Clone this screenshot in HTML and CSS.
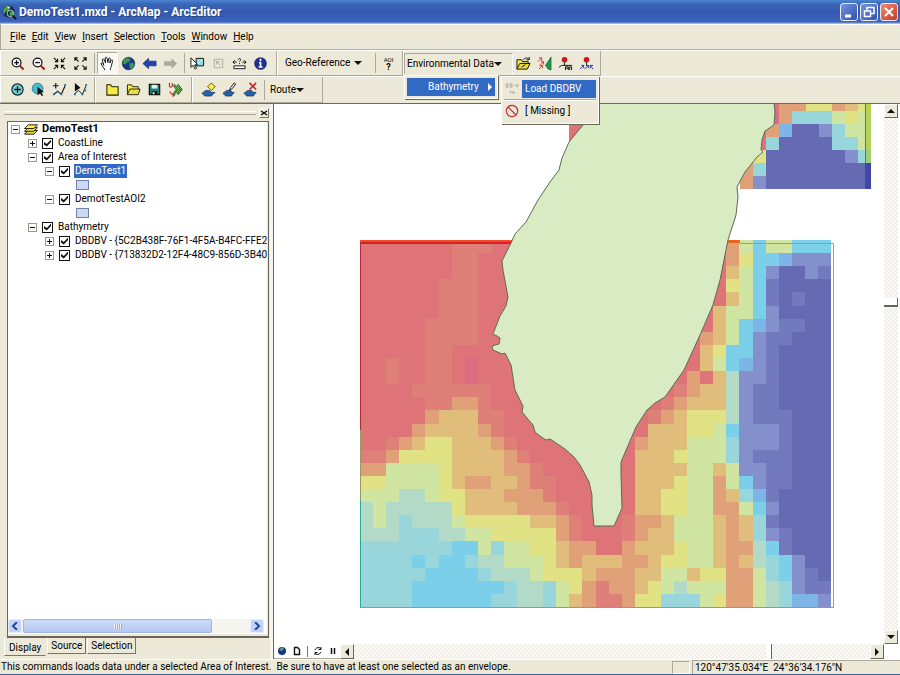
FILE: index.html
```html
<!DOCTYPE html>
<html lang="en">
<head>
<meta charset="utf-8">
<title>DemoTest1.mxd - ArcMap - ArcEditor</title>
<link rel="stylesheet" href="styles.css">
</head>
<body>
<header class="titlebar">
  <svg class="app-icon" viewBox="0 0 16 16"><circle cx="7" cy="7" r="6.500" fill="#17304a"/><path d="M2 3l4-2 3 2-2 3-3 1-2 3-1-3zM9 7l3 0 1 3-3 3-2-3z" fill="#49a548"/><path d="M5 1l4 1-2 2z" fill="#d5ead8"/><circle cx="9" cy="9" r="3.500" fill="none" stroke="#b8cbd8"/><path d="M11 11l4 4" stroke="#111" stroke-width="2"/></svg>
  <h1>DemoTest1.mxd - ArcMap - ArcEditor</h1>
  <button class="win" aria-label="Minimize"><svg viewBox="0 0 16 16"><path d="M4 12h6" stroke="#fff" stroke-width="3"/></svg></button>
  <button class="win" aria-label="Restore"><svg viewBox="0 0 16 16" fill="none" stroke="#fff" stroke-width="1.500"><path d="M6 6V3.500h7v6h-3M6 3.500h7"/><path d="M3.500 7h6v5.500h-6z"/></svg></button>
  <button class="win close" aria-label="Close"><svg viewBox="0 0 16 16"><path d="M4 4l8 8M12 4l-8 8" stroke="#fff" stroke-width="2"/></svg></button>
</header>

<nav class="menubar">
  <button><u>F</u>ile</button><button><u>E</u>dit</button><button><u>V</u>iew</button><button><u>I</u>nsert</button><button><u>S</u>election</button><button><u>T</u>ools</button><button><u>W</u>indow</button><button><u>H</u>elp</button>
</nav>

<div class="toolrow">
  <div class="toolbar">
    <button class="tool" aria-label="Zoom in"><svg viewBox="0 0 16 16"><circle cx="7" cy="7" r="4.700" fill="#f8f8f8" stroke="#111" stroke-width="1.300"/><path d="M4.500 7h5M7 4.500v5" stroke="#111" stroke-width="1.400"/><path d="M10.500 10.500l4 4" stroke="#9c2020" stroke-width="2.200"/></svg></button>
    <button class="tool" aria-label="Zoom out"><svg viewBox="0 0 16 16"><circle cx="7" cy="7" r="4.700" fill="#f8f8f8" stroke="#111" stroke-width="1.300"/><path d="M4.500 7h5" stroke="#111" stroke-width="1.400"/><path d="M10.500 10.500l4 4" stroke="#9c2020" stroke-width="2.200"/></svg></button>
    <button class="tool" aria-label="Fixed zoom in"><svg viewBox="0 0 16 16" fill="none" stroke="#111" stroke-width="1.200"><path d="M2 2l4 4M3 6h3V3M14 2l-4 4M13 6h-3V3M2 14l4-4M3 10h3v3M14 14l-4-4M13 10h-3v3"/></svg></button>
    <button class="tool" aria-label="Fixed zoom out"><svg viewBox="0 0 16 16" fill="none" stroke="#111" stroke-width="1.200"><path d="M2 2l4 4M2 5V2h3M14 2l-4 4M14 5V2h-3M2 14l4-4M2 11v3h3M14 14l-4-4M14 11v3h-3"/></svg></button>
    <span class="sep"></span>
    <button class="tool pressed" aria-label="Pan"><svg viewBox="0 0 16 16"><path d="M5 15c0-2-3-4-4-7 1-1 2 0 3 2L2.500 4C3 2.500 4 3 4.500 4L6 7.500 5.500 2c1-1.500 2-.5 2 .5L8.500 7l.7-4.500c1-1 1.800-.3 1.700 1L10.500 7.500l1.500-3c1-.8 1.700 0 1.400 1L12 11c-.5 2-1 2-1 4" fill="#fff" stroke="#111"/></svg></button>
    <button class="tool" aria-label="Full extent"><svg viewBox="0 0 16 16"><circle cx="8" cy="8" r="6.700" fill="#163a88" stroke="#10204c" stroke-width=".6"/><path d="M3 4l3-2 4 1-1 3-3 1-1 2-3-1zM9 8l4-1 1 3-3 4-2-2z" fill="#3c9a4c"/></svg></button>
    <button class="tool" aria-label="Back"><svg viewBox="0 0 16 16"><path d="M1 8l6-5.500V5.500h8v5H7v3z" fill="#2244b0" stroke="#102860" stroke-width=".7"/></svg></button>
    <button class="tool" aria-label="Forward"><svg viewBox="0 0 16 16"><path d="M15 8L9 2.500V5.500H1v5h8v3z" fill="#aaa99e"/></svg></button>
    <span class="sep"></span>
    <button class="tool" aria-label="Select features"><svg viewBox="0 0 16 16"><path d="M6.500 2.500h8v8h-8z" fill="#8fd8ea" stroke="#111"/><path d="M8 9l5-5" stroke="#fff"/><path d="M1 2v10l2.500-2 2 4 1.500-1-2-3.500L8 9z" fill="#fff" stroke="#111"/></svg></button>
    <button class="tool" aria-label="Clear selection"><svg viewBox="0 0 16 16" fill="none" stroke="#aaa99e"><path d="M3.500 3.500h9v9h-9zM6 6l4 4M6 9V6h3"/></svg></button>
    <button class="tool" aria-label="Measure"><svg viewBox="0 0 16 16" fill="none" stroke="#111"><path d="M2 10.500h12v3H2z" fill="#fff"/><path d="M1 6.500h4M11 6.500h4M3 4.500l-2 2 2 2M13 4.500l2 2-2 2M6.500 4C7 2 10 2.500 9 4.500L8 6M8 7.500v1"/></svg></button>
    <button class="tool" aria-label="Identify"><svg viewBox="0 0 16 16"><circle cx="8" cy="8" r="6.700" fill="#1f2f8e"/><path d="M8 3v2.200M6.500 7H8v4.500M6 11.700h4.200" stroke="#fff" stroke-width="1.800"/></svg></button>
  </div>
  <div class="toolbar georef">
    <button class="drop geo">Geo-Reference <i class="down"></i></button>
    <span class="sep"></span>
    <button class="tool aoi" aria-label="AOI help"><span>AOI</span><b>?</b></button>
  </div>
  <div class="toolbar env-bar">
    <div class="menu-anchor">
      <button class="drop env">Environmental Data<i class="down"></i></button>
      <div class="popup first">
        <button class="item hot">Bathymetry<i class="right"></i></button>
        <div class="popup second">
          <div class="line"><svg class="mini" viewBox="0 0 16 16" fill="none" stroke="#aaa99e"><path d="M1.500 2v4h2V2zM6 2v4h2V2zM10 4h2M13 2l1 4 1.500-4M6 9v3h5M9 10l2 2-2 2"/></svg><button class="item hot">Load DBDBV</button></div>
          <hr>
          <div class="line"><svg class="mini" viewBox="0 0 16 16" fill="none" stroke="#bb3038" stroke-width="1.300"><circle cx="8" cy="8" r="6.500"/><path d="M3.400 3.400l9.200 9.200"/></svg><button class="item">[ Missing ]</button></div>
        </div>
      </div>
    </div>
    <button class="tool" aria-label="Open data"><svg viewBox="0 0 16 16"><path d="M1 14V4h5l1 2h6v2" fill="#f4e94a" stroke="#111"/><path d="M1 14l3-6h11l-3 6z" fill="#e8d93a" stroke="#111"/><path d="M8 4c2-3 5-2 6 0M14 1v3h-3M6 12l4-3" fill="none" stroke="#111"/></svg></button>
    <button class="tool" aria-label="Currents"><svg viewBox="0 0 16 16"><path d="M15 1v14l-3-1-3-4 2-3z" fill="#1e9448" stroke="#104c28" stroke-width=".6"/><path d="M1 6l4-4M2 2h3v3M3 10l4-4M4 6h3v3M2 14l4-4M3 10h3v3" fill="none" stroke="#d33"/></svg></button>
    <button class="tool" aria-label="Station profile"><svg viewBox="0 0 16 16"><circle cx="7" cy="4" r="3" fill="#cb1820"/><path d="M7 7v3M1 12l3-2h11M8 15v-3.500h3V15M12.500 15v-3.500h2V15M8 13h3" fill="none" stroke="#111"/></svg></button>
    <button class="tool" aria-label="Station currents"><svg viewBox="0 0 16 16"><circle cx="8" cy="4" r="3" fill="#cb1820"/><path d="M8 7v3" stroke="#111"/><path d="M1 14l4-4M2.500 10H5v3M6 14l4-4M7.500 10H10v3M15 14l-3-4M12 13v-3h3" fill="none" stroke="#2633a8"/></svg></button>
  </div>
</div>

<div class="toolrow second-row">
  <div class="toolbar edits">
    <button class="tool" aria-label="Add point"><svg viewBox="0 0 16 16"><circle cx="8" cy="8" r="6" fill="#70cfd8" stroke="#123" stroke-width="1.200"/><path d="M4.500 8h7M8 4.500v7" stroke="#111" stroke-width="1.400"/></svg></button>
    <button class="tool" aria-label="Select point"><svg viewBox="0 0 16 16"><circle cx="7" cy="7" r="5.700" fill="#48bccb" stroke="#267c8c"/><path d="M7 5v9l2.500-2 2 3 1.500-1-2-3h3z" fill="#111"/></svg></button>
    <button class="tool" aria-label="Add vertex"><svg viewBox="0 0 16 16"><path d="M1 4h6M4 1v6M2 13l4-3 4 3 4-9" fill="none" stroke="#111" stroke-width="1.200"/><path d="M13 2h2v2h-2zM5 9h2v2H5zM9 12h2v2H9zM1 12h2v2H1z" fill="#2670a8"/></svg></button>
    <button class="tool" aria-label="Edit vertex"><svg viewBox="0 0 16 16"><path d="M2 1v9l6-4z" fill="#111"/><path d="M1 13l5-4 4 4 4-9" fill="none" stroke="#111"/><path d="M13 2h2v2h-2zM9 12h2v2H9zM1 12h2v2H1zM12 8h2v2h-2z" fill="#2670a8"/></svg></button>
  </div>
  <div class="toolbar files">
    <button class="tool" aria-label="New folder"><svg viewBox="0 0 16 16"><path d="M2 14V3h4l1.500 2H14v9z" fill="#f6ed43" stroke="#221" stroke-width="1.100"/></svg></button>
    <button class="tool" aria-label="Open folder"><svg viewBox="0 0 16 16"><path d="M1.500 13.500V3H6l1 2h6v2.500" fill="#f6ed43" stroke="#221"/><path d="M1.500 13.500L4 7.500h11l-2 6z" fill="#e8dd50" stroke="#221"/></svg></button>
    <button class="tool" aria-label="Save"><svg viewBox="0 0 16 16"><path d="M2.500 2.500h11v11h-11z" fill="#1b817b" stroke="#111" stroke-width="1.300"/><path d="M5 3h6v4H5z" fill="#e5eee8"/><path d="M5 10h6v3H5z" fill="#111"/><path d="M6 11h2v2H6z" fill="#fff"/></svg></button>
    <button class="tool" aria-label="Update"><svg viewBox="0 0 16 16" fill="none"><path d="M1.500 1v3c0 2 3 2 3 0V1M2 10c1 3 3 4 5 4M5 12l2 2-2 1.500" stroke="#d22230" stroke-width="1.200"/><path d="M6 3l4 5-4 5M10 3l4 5-4 5" stroke="#15622b" stroke-width="2.600"/><path d="M6 3l4 5-4 5M10 3l4 5-4 5" stroke="#76c83b"/></svg></button>
  </div>
  <div class="toolbar routes">
    <button class="tool" aria-label="New route"><svg viewBox="0 0 16 16"><path d="M1 12l4-3h4l2 2h4l-4 4H4z" fill="#2460ac" stroke="#12284c" stroke-width=".7"/><path d="M11 1l2 2 2 2-2 2-2 2-2-2-2-2 2-2z" fill="#fff04a" stroke="#4c4410"/></svg></button>
    <button class="tool" aria-label="Edit route"><svg viewBox="0 0 16 16"><path d="M1 12l4-3h4l2 2h2l-3 4H4z" fill="#2460ac" stroke="#12284c" stroke-width=".7"/><path d="M8 9l1-3 4-5 1.500 1L11 7z" fill="#fff" stroke="#111"/></svg></button>
    <button class="tool" aria-label="Delete route"><svg viewBox="0 0 16 16"><path d="M1 12l4-3h4l2 2h3l-3 4H4z" fill="#2460ac" stroke="#12284c" stroke-width=".7"/><path d="M7 1l7 7M14 1L7 8" stroke="#c32432" stroke-width="1.700"/></svg></button>
    <span class="sep"></span>
    <button class="drop route">Route<i class="down"></i></button>
  </div>
</div>

<main class="work">
  <aside class="toc">
    <div class="toc-head"><span></span><button aria-label="Close panel"><svg viewBox="0 0 8 8"><path d="M1 2l6 4M7 2L1 6" stroke="#111" stroke-width="1.500"/></svg></button></div>
    <div class="toc-box">
      <ul class="tree">
        <li><div class="node"><button class="exp open" aria-label="Collapse"></button><svg class="layers" viewBox="0 0 16 14"><path d="M1 12l4-4h10l-4 4z" fill="#f0e13c" stroke="#111"/><path d="M1 9l4-4h10l-4 4z" fill="#f0e13c" stroke="#111"/><path d="M1 6l4-4h10l-4 4z" fill="#fff04b" stroke="#111"/></svg><b>DemoTest1</b></div>
          <ul>
            <li><div class="node"><button class="exp" aria-label="Expand"></button><label><input type="checkbox" checked><span>CoastLine</span></label></div></li>
            <li><div class="node"><button class="exp open" aria-label="Collapse"></button><label><input type="checkbox" checked><span>Area of Interest</span></label></div>
              <ul>
                <li><div class="node"><button class="exp open" aria-label="Collapse"></button><label><input type="checkbox" checked><span class="selected">DemoTest1</span></label></div><div class="node"><i class="swatch"></i></div></li>
                <li><div class="node"><button class="exp open" aria-label="Collapse"></button><label><input type="checkbox" checked><span>DemotTestAOI2</span></label></div><div class="node"><i class="swatch"></i></div></li>
              </ul></li>
            <li><div class="node"><button class="exp open" aria-label="Collapse"></button><label><input type="checkbox" checked><span>Bathymetry</span></label></div>
              <ul>
                <li><div class="node"><button class="exp" aria-label="Expand"></button><label><input type="checkbox" checked><span>DBDBV - {5C2B438F-76F1-4F5A-B4FC-FFE24</span></label></div></li>
                <li><div class="node"><button class="exp" aria-label="Expand"></button><label><input type="checkbox" checked><span>DBDBV - {713832D2-12F4-48C9-856D-3B40D</span></label></div></li>
              </ul></li>
          </ul></li>
      </ul>
      <div class="xp-scroll"><button aria-label="Scroll left"><svg viewBox="0 0 8 8"><path d="M6 0L2 4l4 4" fill="none" stroke="#234a8c" stroke-width="2"/></svg></button><div class="track"><div class="thumb"><i></i></div></div><button aria-label="Scroll right"><svg viewBox="0 0 8 8"><path d="M2 0l4 4-4 4" fill="none" stroke="#234a8c" stroke-width="2"/></svg></button></div>
    </div>
    <div class="tabs"><button class="active">Display</button><button>Source</button><button>Selection</button></div>
  </aside>

  <section class="view">
    <div class="map">
      <svg viewBox="275 104 609 539" preserveAspectRatio="xMinYMin meet" role="img" aria-label="Bathymetry map">
        <g id="cells" shape-rendering="crispEdges"></g>
        <path d="M569 104h31v40h-31z" fill="#df7478"/>
        <path d="M865 104h6v59h-6z" fill="#9cc830" opacity=".6"/><path d="M865 163h6v26h-6z" fill="#3f48a8"/>
        <path d="M865.500 104v59" stroke="#56843c"/>
        <path d="M360 240h160v2h-160z" fill="#f14a24"/><path d="M360 242h160v2h-160z" fill="#d62022"/>
        <path d="M727 240h13v3h-13z" fill="#ee641c"/>
        <path d="M740 243.500h27" stroke="#95b63c"/><path d="M767 243.500h66.500V607" fill="none" stroke="#9a9a9e"/>
        <path d="M360.500 242v188" stroke="#b8283c"/><path d="M360.500 430v70" stroke="#9a9a60"/><path d="M360.500 500v107" stroke="#2ba990"/>
        <path d="M360 607.500h474" stroke="#8c9a9e"/>
        <path d="M600 103L774 103 775 112 774 125 765 131 762 140 761 150 763 152 757 157 745 172 737 187 738 197 736 215 728 240 720 280 713 305 700 335 684 370 665 397 655 403 647 410 636 427 621 462 621 475 622 508 614 526 594 526 592 505 592 495 589 482 580 465 574 457 565 449 550 439 546 440 540 436 535 432 533 425 527 418 522 412 523 406 515 390 511 365 505 353 502 354 493 350 492 346 499 344 500 338 497 336 493 334 500 316 506 306 508 297 503 270 502 261 511 243 515 234 526 222 538 200 550 182 559 170 562 158 569 142 583 125z" fill="#d9ebc2" stroke="#5b6b56"/>
      </svg>
    </div>
    <div class="vscroll"><button aria-label="Scroll up"><i class="tri up"></i></button><div class="dots"><i class="vthumb"></i></div><button aria-label="Scroll down"><i class="tri dn"></i></button></div>
    <div class="mapbar">
      <div class="viewbtns">
        <button aria-label="Data view"><svg viewBox="0 0 10 10"><circle cx="5" cy="5" r="4" fill="#17348c"/><path d="M2 4l3-3 2 1-2 3z" fill="#50b060"/></svg></button>
        <button aria-label="Layout view"><svg viewBox="0 0 10 10"><path d="M2.500 1.500h3l2 2v5h-5z" fill="#fff" stroke="#111" stroke-width="1.400"/></svg></button>
        <i class="bar"></i>
        <button aria-label="Refresh"><svg viewBox="0 0 10 10" fill="none" stroke="#111"><path d="M2 4c1-3 5-3 6-1M8 1v2.500H5.500M8 6c-1 3-5 3-6 1M2 9V6.500h2.500"/></svg></button>
        <button aria-label="Pause"><svg viewBox="0 0 10 10"><path d="M3.500 2v6M6.500 2v6" stroke="#111" stroke-width="1.500"/></svg></button>
      </div>
      <button class="raised" aria-label="Scroll left"><i class="tri lf"></i></button>
      <div class="dots"><i class="hthumb"></i></div>
      <button class="raised" aria-label="Scroll right"><i class="tri rt"></i></button>
    </div>
    <div class="corner"></div>
  </section>
</main>

<footer class="status"><p>This commands loads data under a selected Area of Interest.&nbsp; Be sure to have at least one selected as an envelope.</p><span class="cell"></span><span class="coords">120°47'35.034"E&nbsp; 24°36'34.176"N</span></footer>
<script src="map.js"></script>
</body>
</html>
```
FILE: styles.css
```css
* { box-sizing: border-box; }
body {
  margin: 0;
  height: 100vh;
  display: flex;
  flex-direction: column;
  overflow: hidden;
  background: #ece9d8;
  color: #000;
  font: 10px/14px Roboto, "Liberation Sans", sans-serif;
}
button { font: inherit; color: inherit; background: none; border: 0; padding: 0; margin: 0; }
ul { list-style: none; margin: 0; padding: 0; }
svg { display: block; }

.titlebar {
  height: 24px;
  flex: none;
  display: flex;
  align-items: center;
  gap: 2px;
  padding: 0 2px;
  background: linear-gradient(#4a86d2 0, #3a66b8 4px, #3558ae 12px, #3b66c0 22px, #c8cfda 24px);
}
.titlebar h1 { flex: 1; margin: 0; font-size: 12px; line-height: 16px; color: #fff; text-shadow: 1px 1px #23427e; }
.app-icon { width: 15px; height: 15px; }
.win { width: 18px; height: 18px; border: 1px solid #e8edf8; border-radius: 3px; background: linear-gradient(135deg, #7794dc, #2c52b0); }
.win svg { width: 16px; height: 16px; }
.win.close { background: linear-gradient(135deg, #ee8c70, #cc3822); }

.menubar { height: 26px; flex: none; display: flex; align-items: center; gap: 6px; padding-left: 9px; border-bottom: 1px solid #b5b2a2; border-left: 1px solid #aca899; box-shadow: inset 0 1px #fff; }

.toolrow { height: 26px; flex: none; display: flex; border-top: 1px solid #fff; }
.second-row { height: 28px; border-bottom: 1px solid #6b695c; }
.toolbar { display: flex; align-items: center; padding: 0 5px 0 6px; border: solid; border-width: 0 1px 1px 1px; border-color: #fff #aca899 #aca899 #fff; }
.tool { width: 21px; height: 22px; display: grid; place-items: center; }
.tool svg { width: 15px; height: 15px; }
.pressed { background: #f8f7f2; border: 1px solid #aca899; border-color: #aca899 #fff #fff #aca899; }
.sep { width: 1px; height: 20px; margin: 0 2px 0 3px; background: #aca899; }
.drop { display: flex; align-items: center; white-space: nowrap; height: 21px; }
.down { border: 4px solid transparent; border-top-color: #111; border-bottom: 0; }
.georef { width: 126px; padding: 0 3px 0 4px; }
.geo { flex: 1; gap: 4px; padding-left: 3px; }
.aoi { font-size: 6px; line-height: 7px; align-content: center; }
.aoi b { font-size: 9px; line-height: 8px; }
.env-bar { padding: 0 3px 0 0; }
.menu-anchor { position: relative; width: 109px; }
.env { width: 109px; border: 1px solid #aca899; border-right-color: #fff; border-bottom: 0; padding-left: 2px; }
.edits { padding-right: 3px; }
.files { padding-left: 6px; }
.routes { padding: 0 18px 0 5px; }
.route { padding-left: 3px; }

.popup { position: absolute; z-index: 2; padding: 2px; background: #ece9d8; border: 1px solid #fff; box-shadow: 1px 1px #68665a; }
.first { left: 0; top: 22px; width: 94px; }
.second { left: 96px; top: 0; width: 98px; }
.item { display: block; flex: 1; height: 18px; padding: 0 3px; text-align: left; white-space: nowrap; }
.first > .item { width: 100%; padding-left: 21px; display: flex; align-items: center; justify-content: space-between; }
.hot { background: #316ac5; color: #fff; }
.right { border: 4px solid transparent; border-left-color: #fff; border-right: 0; }
.line { display: flex; align-items: center; gap: 2px; padding: 1px 0; }
.mini { width: 16px; height: 14px; }
.popup hr { margin: 0; border: 0; border-top: 1px solid #aca899; border-bottom: 1px solid #fff; }

.work { flex: 1; min-height: 0; display: flex; }
.toc { width: 274px; flex: none; display: flex; flex-direction: column; padding: 0 4px 2px; border-right: 1px solid #68665a; box-shadow: inset -3px 0 #f7f5ec; }
.toc-head { height: 17px; display: flex; align-items: center; gap: 3px; }
.toc-head span { flex: 1; height: 4px; border-top: 1px solid #fff; border-bottom: 1px solid #aca899; }
.toc-head button { width: 10px; height: 10px; border: 1px solid #aca899; border-color: #fff #77756a #77756a #fff; }
.toc-head svg { width: 8px; height: 8px; }
.toc-box { flex: 1; min-height: 0; display: flex; flex-direction: column; margin: 0 0 0 3px; background: #fff; border: 1px solid #68665a; border-bottom-width: 2px; box-shadow: inset -1px -2px #ece9d8; padding: 0 1px 3px 0; }
.tree { flex: 1; overflow: hidden; padding-left: 3px; white-space: nowrap; }
.tree ul { padding-left: 17px; }
.node { height: 14px; display: flex; align-items: center; }
.node label { display: flex; align-items: center; }
.node b { font-size: 11px; margin-left: 3px; }
.node span { padding: 0 1px; margin-left: 4px; }
.exp { width: 9px; height: 9px; flex: none; border: 1px solid #9c9a8c; background: linear-gradient(#111, #111) center / 5px 1px no-repeat, linear-gradient(#111, #111) center / 1px 5px no-repeat, #fff; }
.exp.open { background: linear-gradient(#111, #111) center / 5px 1px no-repeat, #fff; }
.node input { appearance: none; width: 11px; height: 11px; margin: 0 0 0 5px; border: 1px solid #111; background: #fff; display: grid; place-items: center; }
.node input:checked::before { content: ""; width: 7px; height: 7px; background: #111; clip-path: polygon(0 35%, 40% 65%, 100% 0, 100% 35%, 40% 100%, 0 70%); }
.layers { width: 16px; height: 13px; margin-left: 3px; }
.selected { background: #316ac5; color: #fff; }
.swatch { width: 13px; height: 10px; margin-left: 31px; background: #cdd8f4; border: 1px solid #7483a5; }

.xp-scroll { height: 14px; margin-right: 3px; display: flex; background: #f6f5f0; }
.xp-scroll button { width: 14px; display: grid; place-items: center; background: #c2d3fb; border: 1px solid #e6edff; border-radius: 2px; }
.xp-scroll svg { width: 8px; height: 8px; }
.track { flex: 1; }
.thumb { width: 83%; height: 14px; display: grid; place-items: center; margin-left: 1px; background: linear-gradient(#cbdafa, #b5c8f0); border: 1px solid #9eb4e4; border-radius: 2px; }
.thumb i { width: 8px; height: 5px; background: repeating-linear-gradient(90deg, #edf3ff 0 1px, #94abd9 1px 2px); }
.tabs { height: 19px; display: flex; align-items: flex-start; gap: 1px; }
.tabs button { height: 16px; padding: 0 3px; border: 1px solid #77756a; border-top: 0; border-left-color: #fff; background: #ece9d8; }
.tabs .active { height: 18px; padding: 2px 4px 0; border-right-color: #ece9d8; }

.view { flex: 1; min-width: 0; display: grid; grid-template: minmax(0, 1fr) 15px / minmax(0, 1fr) 16px; background: #fff; }
.map { overflow: hidden; border-left: 1px solid #fff; }
.map svg { width: 100%; height: 100%; }
.vscroll { display: flex; flex-direction: column; padding-right: 2px; }
.vscroll button, .raised { flex: none; display: grid; place-items: center; background: #ece9d8; border: 1px solid; border-color: #fff #68665a #68665a #fff; }
.vscroll button { height: 14px; }
.dots { flex: 1; background: repeating-conic-gradient(#f1efe8 0 25%, #faf9f6 0 50%) 0 0 / 4px 4px; }
.vthumb { display: block; height: 37%; border-bottom: 2px solid #68665a; background: linear-gradient(90deg, #fff 13px, #68665a 13px) bottom / 100% 7px no-repeat; }
.hthumb { display: block; width: 81%; height: 100%; background: linear-gradient(90deg, #fff 5px, #68665a 5px) right / 6px 100% no-repeat; }
.tri { border: 4px solid transparent; }
.up { border-bottom-color: #111; border-top: 0; }
.dn { border-top-color: #111; border-bottom: 0; }
.lf { border-right-color: #111; border-left: 0; }
.rt { border-left-color: #111; border-right: 0; }
.mapbar { display: flex; }
.viewbtns { display: flex; align-items: center; border-bottom: 1px solid #aca899; }
.viewbtns button { width: 15px; height: 14px; display: grid; place-items: center; }
.viewbtns svg { width: 10px; height: 10px; }
.bar { width: 1px; height: 11px; margin: 0 2px 0 3px; background: #77756a; }
.raised { width: 14px; }

.status { height: 16px; flex: none; display: flex; align-items: center; gap: 2px; border-bottom: 1px solid #3c6494; border-top: 1px solid #fff; }
.status p { flex: 1; margin: 0; padding-left: 1px; white-space: nowrap; overflow: hidden; }
.cell { width: 18px; height: 13px; border: 1px solid #aca899; border-color: #aca899 #fff #fff #aca899; }
.coords { width: 208px; border: 1px solid #aca899; border-width: 1px 0 0 1px; line-height: 13px; padding-left: 2px; }
```
FILE: map.js
```js
const palette = {
  r: "#df7478", p: "#dc6c80", s: "#df8078", o: "#e0a078", a: "#e0bd7a", y: "#e1e284",
  l: "#d1e5a2", g: "#b2dac6", t: "#98d6dc", c: "#7ccfe8", b: "#7db5e8", v: "#8390cb",
  w: "#727abd", n: "#656ab2"
};

// Depth classes, one letter per cell, north to south; west, centre and east blocks.
const south = [
  "rrrrrrrsssrrrr rrrrrrrrrrrrrr olcllccc",
  "rrrrrrrssrrrrr rrrrrrrrrrrrrr oyccbvvv",
  "rrrrrrrssrrrrr rrrrrrrrrrrrrr alcvnnvw",
  "rrrrrrsssrrrrr rrrrrrrrrrrrrr ylcwnnnn",
  "rrrrrrsssrrrrr rrrrrrrrrrrrrr alcwnwnn",
  "rrrrrrsssrrrrr rrrrrrrrrrrrra llcvnnnn",
  "rrrrrssssrrrrr rrrrrrrrrrrrra lcbvwwnn",
  "rrrrrssssrrrrr rrrrrrrrrrrroa lcvwwnnn",
  "rrrrrssrrrrrrr rrrrrrrrrrrray ccvwnnnn",
  "rrsrrssrprrrrr rrrrrrrrrrrral cbvwnnnn",
  "rrsrrssrprrrrr rrrrrrrrrrrora gvvwnnnn",
  "rrrrssssssrrrr rrrrrrrrrrsoaa gvwwnnnn",
  "rrrrrssoosrrrr rrrrrrrrrsoaaa gvwwnnnn",
  "rrrrroaaassrrr rrrrrrrrsoayyy gvwwwnnn",
  "rrrroaaaaosrrr rrrrrrrraaayyl cvvvwnnn",
  "rrsoayyaaaosrr rrrrrrroaaalll tvvvwnnn",
  "ssoyyyyaaaaosr rrrrrrraaaylll tvwwwnnn",
  "oollllyaaaaoos rrrrrrraaaalla lvvwwnnn",
  "yyllllyaooaaos srrrrrraaayllo lcvwwnnn",
  "lllgglyyaaaooo srrrrrraayyllo atbwnnnn",
  "glgggggyaaaaoo osrrrrraayyllo olcvnnnn",
  "glgtggglyyyyya aosrrrsooallla oatwnnnn",
  "gggtttggllyyyy yosrrrsoaallla oatvwnnn",
  "tttttttccltlly yaoorroaaaylla oogcwnnn",
  "ttttctcctgglll yaoaaaooayylla oagtcvnn",
  "tttttcccctgggl yyyaoooaallayy ooltcvwn",
  "ttttccccccctgg tlyosooaylglll oolgtvww",
  "ttttccccccttgg tlaossoyytttly oolgtbbv"
];

const north = [
  "rrrooyyoay",
  "rrpotttlyl",
  "rrobnnvtll",
  "rrtnnnnttl",
  "rynnnnnnvt",
  "otnnnnnnnn",
  "ovnnnnnnnn"
];

const NS = "http://www.w3.org/2000/svg";
const layer = document.getElementById("cells");

function drawGrid(rows, left, top, width, height) {
  rows.forEach((row, j) => {
    const keys = row.replaceAll(" ", "");
    const stepX = width / keys.length;
    const stepY = height / rows.length;
    [...keys].forEach((key, i) => {
      const x = Math.round(left + i * stepX);
      const y = Math.round(top + j * stepY);
      const rect = document.createElementNS(NS, "rect");
      rect.setAttribute("x", x);
      rect.setAttribute("y", y);
      rect.setAttribute("width", Math.round(left + (i + 1) * stepX) - x);
      rect.setAttribute("height", Math.round(top + (j + 1) * stepY) - y);
      rect.setAttribute("fill", palette[key]);
      layer.append(rect);
    });
  });
}

drawGrid(south, 360, 240, 471, 367);
drawGrid(north, 740, 98, 131, 91);
```
